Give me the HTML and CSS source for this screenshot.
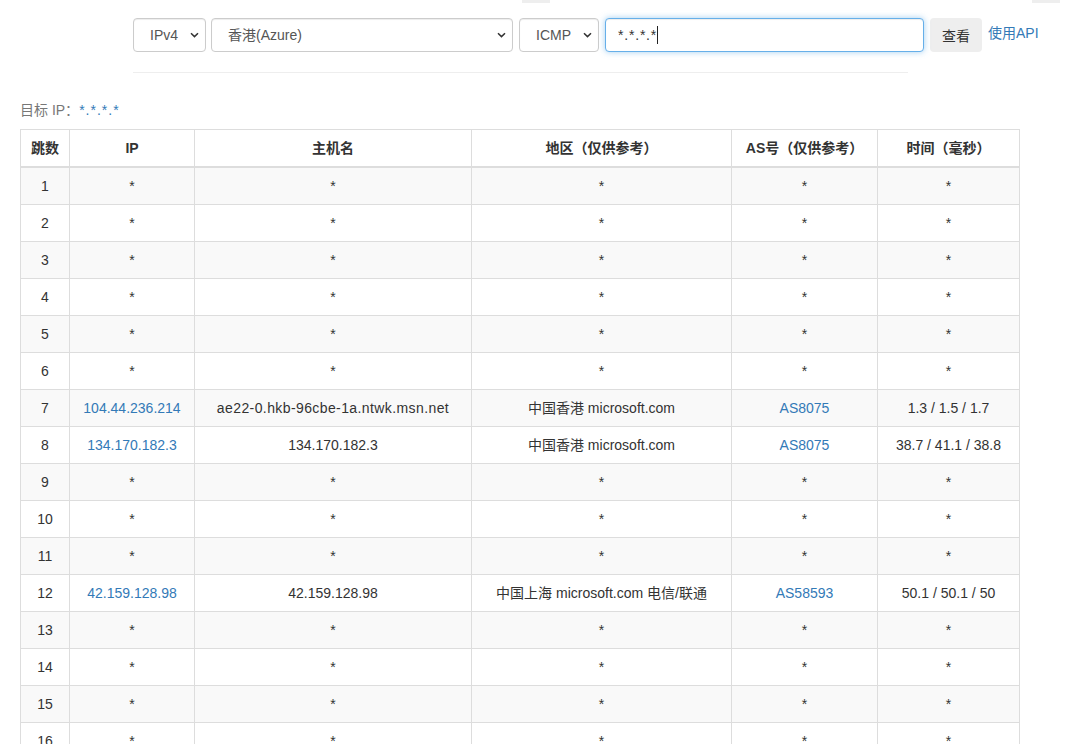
FILE: index.html
```html
<!DOCTYPE html>
<html lang="zh-CN">
<head>
<meta charset="utf-8">
<title>Traceroute</title>
<link rel="stylesheet" href="styles.css">
</head>
<body>
<div class="topstrip">
  <span class="stub stub-a"></span>
  <span class="stub stub-b"></span>
</div>
<form class="query">
  <span class="sel sel-ver">
    <select class="ctl"><option>IPv4</option><option>IPv6</option></select>
    <svg class="chev" width="9" height="6" viewBox="0 0 9 6"><path d="M1 1.2 L4.5 4.6 L8 1.2" fill="none" stroke="#333" stroke-width="1.5"/></svg>
  </span>
  <span class="sel sel-node">
    <select class="ctl"><option>香港(Azure)</option></select>
    <svg class="chev" width="9" height="6" viewBox="0 0 9 6"><path d="M1 1.2 L4.5 4.6 L8 1.2" fill="none" stroke="#333" stroke-width="1.5"/></svg>
  </span>
  <span class="sel sel-proto">
    <select class="ctl"><option>ICMP</option><option>UDP</option><option>TCP</option></select>
    <svg class="chev" width="9" height="6" viewBox="0 0 9 6"><path d="M1 1.2 L4.5 4.6 L8 1.2" fill="none" stroke="#333" stroke-width="1.5"/></svg>
  </span>
  <span class="inwrap">
    <input class="ctl ipinput" type="text" value="*.*.*.*">
    <span class="caret"></span>
  </span>
  <button type="button" class="btn">查看</button>
  <a class="api" href="#">使用API</a>
</form>
<hr class="rule">
<p class="target">目标 IP：<a href="#">*.*.*.*</a></p>
<table class="trace">
  <colgroup>
    <col class="c-hop"><col class="c-ip"><col class="c-host"><col class="c-geo"><col class="c-as"><col class="c-time">
  </colgroup>
  <thead>
    <tr><th>跳数</th><th>IP</th><th>主机名</th><th>地区（仅供参考）</th><th>AS号（仅供参考）</th><th>时间（毫秒）</th></tr>
  </thead>
  <tbody>
    <tr><td>1</td><td>*</td><td>*</td><td>*</td><td>*</td><td>*</td></tr>
    <tr><td>2</td><td>*</td><td>*</td><td>*</td><td>*</td><td>*</td></tr>
    <tr><td>3</td><td>*</td><td>*</td><td>*</td><td>*</td><td>*</td></tr>
    <tr><td>4</td><td>*</td><td>*</td><td>*</td><td>*</td><td>*</td></tr>
    <tr><td>5</td><td>*</td><td>*</td><td>*</td><td>*</td><td>*</td></tr>
    <tr><td>6</td><td>*</td><td>*</td><td>*</td><td>*</td><td>*</td></tr>
    <tr><td>7</td><td><a href="#">104.44.236.214</a></td><td class="host">ae22-0.hkb-96cbe-1a.ntwk.msn.net</td><td>中国香港 microsoft.com</td><td><a href="#">AS8075</a></td><td>1.3 / 1.5 / 1.7</td></tr>
    <tr><td>8</td><td><a href="#">134.170.182.3</a></td><td>134.170.182.3</td><td>中国香港 microsoft.com</td><td><a href="#">AS8075</a></td><td>38.7 / 41.1 / 38.8</td></tr>
    <tr><td>9</td><td>*</td><td>*</td><td>*</td><td>*</td><td>*</td></tr>
    <tr><td>10</td><td>*</td><td>*</td><td>*</td><td>*</td><td>*</td></tr>
    <tr><td>11</td><td>*</td><td>*</td><td>*</td><td>*</td><td>*</td></tr>
    <tr><td>12</td><td><a href="#">42.159.128.98</a></td><td>42.159.128.98</td><td>中国上海 microsoft.com 电信/联通</td><td><a href="#">AS58593</a></td><td>50.1 / 50.1 / 50</td></tr>
    <tr><td>13</td><td>*</td><td>*</td><td>*</td><td>*</td><td>*</td></tr>
    <tr><td>14</td><td>*</td><td>*</td><td>*</td><td>*</td><td>*</td></tr>
    <tr><td>15</td><td>*</td><td>*</td><td>*</td><td>*</td><td>*</td></tr>
    <tr><td>16</td><td>*</td><td>*</td><td>*</td><td>*</td><td>*</td></tr>
  </tbody>
</table>
</body>
</html>
```

FILE: styles.css
```css
* { box-sizing: border-box; }
html, body { margin: 0; padding: 0; background: #fff; }
body {
  font-family: "Liberation Sans", "Noto Sans CJK SC", sans-serif;
  font-size: 14px;
  line-height: 1.42857;
  color: #333;
}
a { color: #337ab7; text-decoration: none; }

.topstrip { display: flex; height: 3px; }
.stub { display: block; height: 3px; background: #eeeeee; width: 28px; }
.stub-a { margin-left: 522px; }
.stub-b { margin-left: 482px; }

.query {
  display: flex;
  align-items: center;
  gap: 6px;
  margin: 15px 0 0 133px;
  height: 34px;
}
.sel { position: relative; display: block; height: 34px; }
.sel-ver { width: 73px; }
.sel-node { width: 302px; margin-left: -1px; }
.sel-proto { width: 80px; }
.ctl {
  display: block;
  width: 100%;
  height: 34px;
  font-family: "Liberation Sans", "Noto Sans CJK SC", sans-serif;
  font-size: 14px;
  color: #555;
  background: #fff;
  border: 1px solid #ccc;
  border-radius: 4px;
  box-shadow: inset 0 1px 1px rgba(0,0,0,.075);
  outline: none;
}
select.ctl {
  -webkit-appearance: none;
  appearance: none;
  padding: 0 20px 0 16px;
}
.chev { position: absolute; right: 7px; top: 14px; pointer-events: none; }
.inwrap { position: relative; display: block; width: 319px; height: 34px; }
.ipinput {
  padding: 6px 12px;
  border-color: #66afe9;
  box-shadow: inset 0 1px 1px rgba(0,0,0,.075), 0 0 6px rgba(102,175,233,.6);
  color: #333;
  letter-spacing: 0.8px;
}
.caret { position: absolute; left: 52px; top: 8px; width: 1px; height: 18px; background: #222; }
.btn {
  height: 34px;
  width: 52px;
  padding: 0;
  border: none;
  border-radius: 4px;
  background: #eeeeee;
  color: #333;
  font-family: "Liberation Sans", "Noto Sans CJK SC", sans-serif;
  font-size: 14px;
}
.api { font-size: 14px; margin-top: -2px; }

.rule {
  margin: 20px 0 0 133px;
  width: 775px;
  border: 0;
  border-top: 1px solid #eeeeee;
  height: 0;
}
.target {
  margin: 28px 0 0 20px;
  font-size: 14px;
  line-height: 18px;
  color: #777;
}
.target a { letter-spacing: 1px; }
.trace {
  margin: 10px 0 0 20px;
  width: 999px;
  table-layout: fixed;
  border-collapse: collapse;
  border-spacing: 0;
  border: 1px solid #ddd;
}
.c-hop { width: 49px; }
.c-ip { width: 125px; }
.c-host { width: 277px; }
.c-geo { width: 260px; }
.c-as { width: 146px; }
.c-time { width: 142px; }
.trace th, .trace td {
  border: 1px solid #ddd;
  padding: 8px;
  text-align: center;
  vertical-align: middle;
  line-height: 20px;
  white-space: nowrap;
}
.trace td.host { letter-spacing: 0.4px; }
.trace th { font-weight: bold; border-bottom-width: 2px; }
.trace tbody tr:nth-of-type(odd) { background: #f9f9f9; }
```
